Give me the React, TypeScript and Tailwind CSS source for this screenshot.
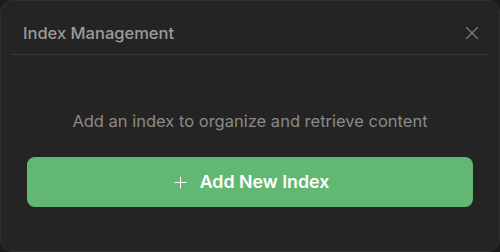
import { X, Plus } from "lucide-react";

export default function App() {
  return (
    <div className="w-[500px] h-[252px] bg-[#1b1b1b] font-['Inter',sans-serif]">
      <div className="h-full rounded-xl border border-[#2e2e2e] bg-[#242424] flex flex-col">
        {/* Header */}
        <div className="mx-[10px] h-[54px] flex items-center justify-between border-b border-[#383838] pl-3 pr-[6px] pt-[11px]">
          <h2 className="text-[16.5px] font-medium text-[#9b9b9b]">Index Management</h2>
          <button className="text-[#7c7c7c]" aria-label="Close">
            <X className="w-[22px] h-[22px]" strokeWidth={1.4} />
          </button>
        </div>

        {/* Body */}
        <div className="flex flex-col px-[26px] pt-[56px]">
          <p className="text-center text-[16.5px] text-[#8a8a8a] leading-5">
            Add an index to organize and retrieve content
          </p>
          <button className="mt-[26px] h-[50px] rounded-lg bg-[#62b872] flex items-center justify-center gap-[10px] text-white">
            <Plus className="w-[19px] h-[19px]" strokeWidth={1.3} />
            <span className="text-[17.8px] font-semibold">Add New Index</span>
          </button>
        </div>
      </div>
    </div>
  );
}
